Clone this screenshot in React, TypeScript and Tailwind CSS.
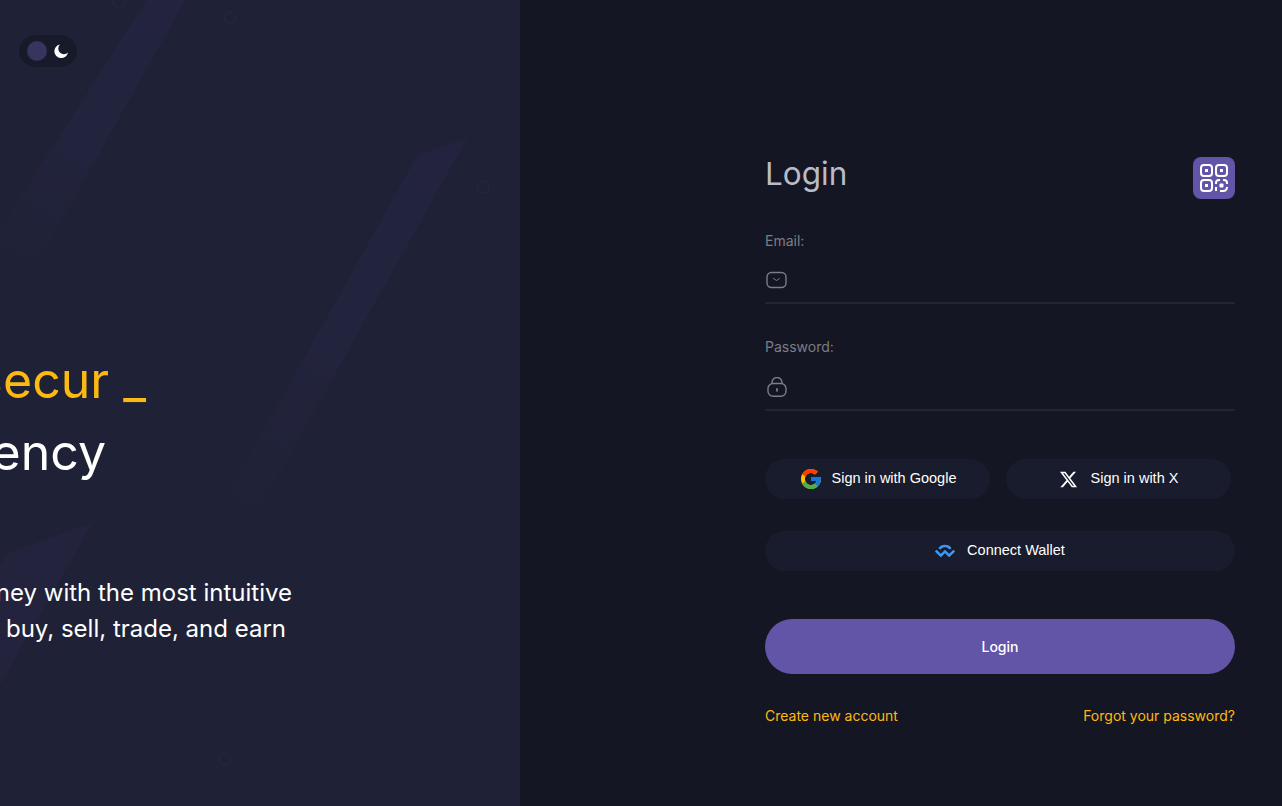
import { FcGoogle } from 'react-icons/fc';
import { FaXTwitter } from 'react-icons/fa6';
import { SiWalletconnect } from 'react-icons/si';

function LeftBackdrop() {
  return (
    <svg className="absolute inset-0 h-full w-full" viewBox="0 0 520 806" fill="none">
      <defs>
        <linearGradient id="bandOne" x1="165" y1="0" x2="10" y2="280" gradientUnits="userSpaceOnUse">
          <stop offset="0" stopColor="#23233f" />
          <stop offset="0.5" stopColor="#22233d" />
          <stop offset="1" stopColor="#1f2236" />
        </linearGradient>
        <linearGradient id="bandTwo" x1="440" y1="145" x2="220" y2="530" gradientUnits="userSpaceOnUse">
          <stop offset="0" stopColor="#23233f" />
          <stop offset="0.55" stopColor="#22233c" />
          <stop offset="1" stopColor="#1f2236" />
        </linearGradient>
      </defs>
      <path d="M147 0H185L28 280H0V229Z" fill="url(#bandOne)" />
      <path d="M418 155L467 138L242 540H202Z" fill="url(#bandTwo)" />
      <path d="M8 553L93 522L0 685V565Z" fill="#23233e" />
      <g stroke="#272a3f" strokeWidth="1">
        <circle cx="119" cy="2" r="6" />
        <circle cx="230" cy="18" r="6" />
        <circle cx="483" cy="187" r="6" />
        <circle cx="225" cy="759" r="6" />
      </g>
    </svg>
  );
}

function QrIcon() {
  return (
    <svg width="30" height="30" viewBox="0 0 30 30" fill="none" stroke="white" strokeWidth="2">
      <rect x="2" y="2" width="11" height="11" rx="3" />
      <rect x="17" y="2" width="11" height="11" rx="3" />
      <rect x="2" y="17" width="11" height="11" rx="3" />
      <path d="M17 28v-4M17 21v-1c0-2 1-3 3-3h1M24 17h1c2 0 3 1 3 3v1M28 24c0 3-1 4-4 4h-3" />
      <rect x="6.5" y="6.5" width="2" height="2" fill="white" strokeWidth="1" />
      <rect x="21.5" y="6.5" width="2" height="2" fill="white" strokeWidth="1" />
      <rect x="6.5" y="21.5" width="2" height="2" fill="white" strokeWidth="1" />
      <rect x="20.5" y="20.5" width="4" height="4" rx="1" fill="white" strokeWidth="0" />
    </svg>
  );
}

function MailIcon() {
  return (
    <svg width="22" height="18" viewBox="0 0 22 18" fill="none" stroke="#7c7d86">
      <rect x="1" y="1.5" width="19" height="15" rx="4.5" strokeWidth="1.4" />
      <path d="M7.5 7.5l3 2 3-2" strokeWidth="1" strokeLinecap="round" />
    </svg>
  );
}

function LockIcon() {
  return (
    <svg width="21" height="20" viewBox="0 0 21 20" fill="none" stroke="#7c7d86" strokeWidth="1.4">
      <rect x="2" y="6.5" width="18" height="12.8" rx="5" />
      <path d="M6 7V5.5a5 5 0 0 1 10 0V7" />
      <path d="M11 12v1.8" strokeWidth="1.8" strokeLinecap="round" />
    </svg>
  );
}

function MoonIcon() {
  return (
    <svg width="16" height="16" viewBox="0 0 16 16" fill="white">
      <path d="M7 1.4A6.9 6.9 0 1 0 15 9.6a5.2 5.2 0 0 1-8-8.2Z" />
    </svg>
  );
}

function Field({ label, icon, className, rowClass }: { label: string; icon: React.ReactNode; className: string; rowClass: string }) {
  return (
    <div className={className}>
      <label className="block text-[14px] leading-5 text-[#7c7d86]">{label}</label>
      <div className={`flex items-start border-b-2 border-[#232536] ${rowClass}`}>{icon}</div>
    </div>
  );
}

export default function App() {
  return (
    <div className="flex h-screen w-full overflow-hidden bg-[#141623] font-['Inter',sans-serif]">
      {/* Left panel */}
      <section className="relative w-[520px] shrink-0 overflow-hidden bg-[#1f2236]">
        <LeftBackdrop />
        <div className="absolute left-[19px] top-[35px] flex h-8 w-[58px] items-center rounded-full bg-[#171a29] pl-2">
          <span className="h-5 w-5 rounded-full bg-[#37345f]" />
          <span className="ml-[6px]"><MoonIcon /></span>
        </div>
        <div className="relative ml-[-300px] w-[640px] pt-[344px]">
          <h1 className="text-right text-[50px] font-normal leading-[72px]">
            <span className="block pr-[194px] text-[#fdb913]">Fast and Secur _</span>
            <span className="block pr-[234px] text-white">Cryptocurrency</span>
          </h1>
          <p className="mt-[87px] text-right text-[24px] leading-9 text-white">
            <span className="block pr-[48px]">Manage your money with the most intuitive</span>
            <span className="block pr-[54px]">platform to buy, sell, trade, and earn</span>
          </p>
        </div>
      </section>

      {/* Login form */}
      <main className="flex-1 pl-[245px] pr-[47px] pt-[157px]">
        <div className="flex items-start justify-between">
          <h2 className="text-[31.5px] font-normal leading-[34px] text-[#b9bcc7]">Login</h2>
          <button className="flex h-[42px] w-[42px] items-center justify-center rounded-lg bg-[#6255a8]">
            <QrIcon />
          </button>
        </div>

        <Field className="mt-[32px]" rowClass="mt-[20px] h-[33px] pl-px" label="Email:" icon={<MailIcon />} />
        <Field className="mt-[33px]" rowClass="mt-[20px] h-[34px] pl-px" label="Password:" icon={<LockIcon />} />

        <div className="mt-[48px] flex gap-4 font-['Liberation_Sans',sans-serif] text-[14.5px] text-white">
          <button className="flex h-10 w-[225px] items-center justify-center gap-[9px] rounded-full bg-[#191c2c]">
            <FcGoogle size={24} />
            Sign in with Google
          </button>
          <button className="flex h-10 w-[225px] items-center justify-center gap-[13px] rounded-full bg-[#191c2c]">
            <FaXTwitter size={19} />
            Sign in with X
          </button>
        </div>
        <button className="mt-8 flex h-10 w-full items-center justify-center gap-[12px] rounded-full bg-[#191c2c] font-['Liberation_Sans',sans-serif] text-[14.5px] text-white">
          <SiWalletconnect size={20} className="text-[#3b99fc]" />
          Connect Wallet
        </button>

        <button className="mt-12 h-[55px] w-full rounded-full bg-[#6255a8] text-[14px] font-medium text-white">
          Login
        </button>

        <div className="mt-[32px] flex justify-between text-[14px] font-normal leading-5 text-[#fdb913]">
          <a>Create new account</a>
          <a>Forgot your password?</a>
        </div>
      </main>
    </div>
  );
}
